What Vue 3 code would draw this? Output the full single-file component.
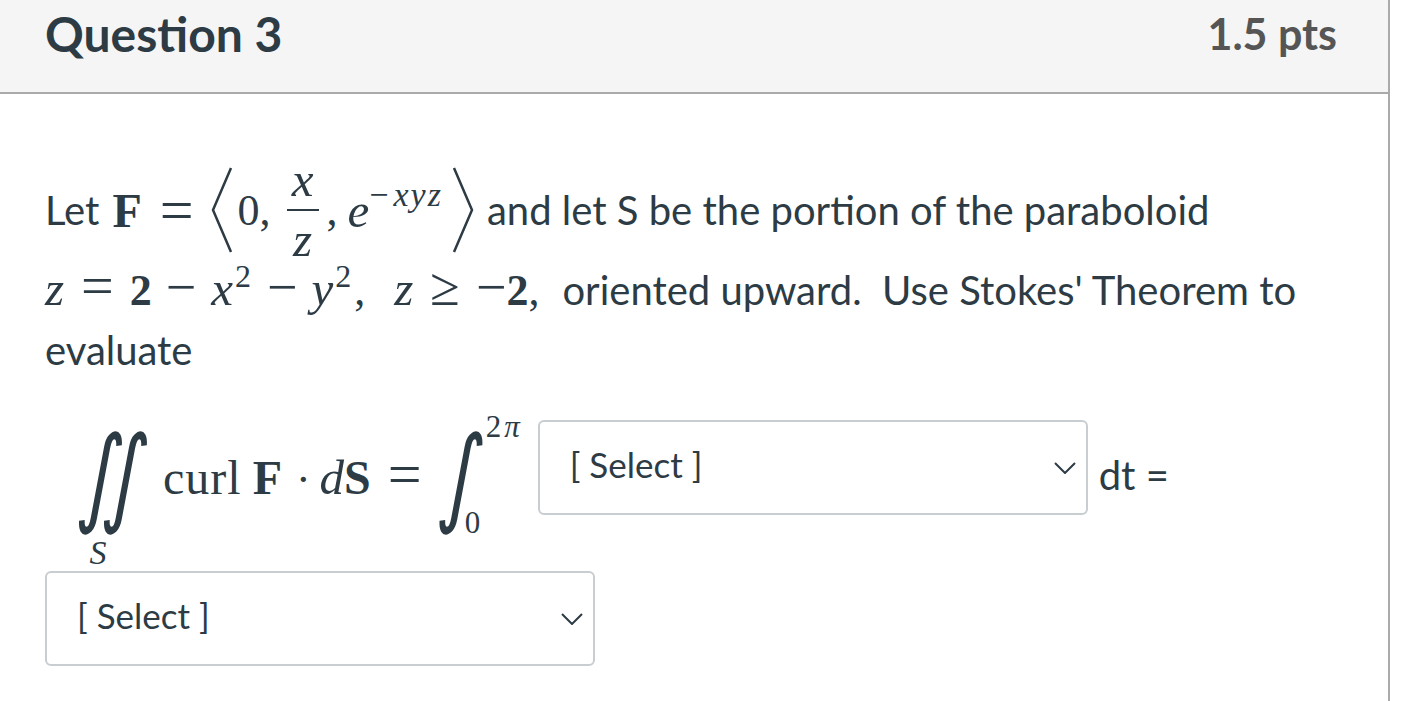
<template>
  <div class="question">
    <header class="q-header">
      <h2 class="q-title">Question 3</h2>
      <div class="q-pts">1.5 pts</div>
    </header>

    <section class="q-body">
      <div class="line line-1">
        <span class="txt">Let</span>
        <b class="math big-b f">F</b>
        <span class="math eq">=</span>
        <svg class="angle open" width="24" height="88" viewBox="0 0 24 88"><path d="M21 2 L3 44 L21 86" /></svg>
        <span class="math zero">0,</span>
        <span class="frac">
          <i class="math ital num">x</i>
          <i class="math ital den">z</i>
        </span>
        <span class="math comma">,</span>
        <i class="math ital e">e</i>
        <span class="math sup">−<i>xyz</i></span>
        <svg class="angle close" width="24" height="88" viewBox="0 0 24 88"><path d="M3 2 L21 44 L3 86" /></svg>
        <span class="txt after">and let S be the portion of the paraboloid</span>
      </div>

      <div class="line line-2">
        <i class="math ital">z</i>
        <span class="math eq-2">=</span>
        <b class="math heavy">2</b>
        <span class="math op m1">−</span>
        <i class="math ital">x</i><span class="math pow">2</span>
        <span class="math op m2">−</span>
        <i class="math ital">y</i><span class="math pow p2">2</span>
        <span class="math c2">,</span>
        <i class="math ital">z</i>
        <span class="math op ge">≥</span>
        <span class="math op">−</span><b class="math heavy">2</b><span class="math">,</span>
        <span class="txt after2">oriented upward.&nbsp; Use Stokes' Theorem to</span>
      </div>

      <div class="line line-3"><span class="txt">evaluate</span></div>

      <div class="line line-4">
        <span class="dbl">
          <span class="int-row"><span class="int">∫</span><span class="int">∫</span></span>
          <i class="math s-sub">S</i>
        </span>
        <span class="expr">
          <span class="math curl">curl</span>
          <b class="math big-b f2">F</b>
          <span class="math dot">·</span>
          <i class="math ital">d</i><b class="math big-b">S</b>
          <span class="math eq2">=</span>
        </span>
        <span class="single">
          <span class="int int-one">∫</span>
          <span class="limits">
            <span class="math lim up">2<i>π</i></span>
            <span class="math lim zero-lim">0</span>
          </span>
        </span>
        <div class="select wide">
          <span>[ Select ]</span>
          <svg width="22" height="12" viewBox="0 0 22 12"><path d="M1 1 L11 11 L21 1" /></svg>
        </div>
        <span class="txt dt">dt =</span>
      </div>

      <div class="select narrow">
        <span>[ Select ]</span>
        <svg width="22" height="12" viewBox="0 0 22 12"><path d="M1 1 L11 11 L21 1" /></svg>
      </div>
    </section>
  </div>
</template>

<script setup>
</script>

<style>
body {
  background: #fff;
  overflow: hidden;
}
</style>

<style scoped>
.question {
  width: 1388px;
  height: 701px;
  border-right: 2px solid #aaa;
  font-family: Lato, "Liberation Sans", sans-serif;
  color: #2d3b45;
}

.q-header {
  display: flex;
  justify-content: space-between;
  align-items: center;
  height: 66px;
  padding: 0 51px 26px 45px;
  background: #f5f5f5;
  border-bottom: 2px solid #aaa;
}

.q-title {
  margin: 0;
  font-size: 48px;
  font-weight: 700;
}

.q-pts {
  font-size: 43px;
  font-weight: 700;
  color: #555;
}

.q-body {
  padding: 70px 0 0 45px;
}

.line {
  display: flex;
  align-items: baseline;
  white-space: pre;
}

.line-1 {
  align-items: center;
  height: 92px;
}

.line-2 {
  height: 64px;
  line-height: 60px;
}

.line-3 {
  height: 60px;
  line-height: 60px;
  margin-bottom: 40px;
}

.txt {
  font-size: 40px;
}

.math {
  font-family: "Liberation Serif", serif;
  font-size: 44px;
  font-weight: 400;
}

.ital {
  font-size: 49px;
}

.big-b {
  font-size: 48px;
  font-weight: 700;
}

.heavy {
  font-weight: 700;
}

.f {
  margin-left: 13px;
}

.eq {
  margin: 0 16px 0 18px;
  font-size: 60px;
}

.zero {
  margin-left: 4px;
}

.angle {
  flex: none;
}

.angle path {
  fill: none;
  stroke: #2d3b45;
  stroke-width: 2.5;
}

.frac {
  display: inline-flex;
  flex-direction: column;
  align-items: center;
  width: 32px;
  margin-left: 16px;
}

.num {
  width: 100%;
  border-bottom: 2px solid #2d3b45;
  text-align: center;
  line-height: 58px;
}

.den {
  line-height: 58px;
}

.comma {
  margin-left: 8px;
}

.e {
  margin-left: 10px;
}

.sup {
  font-size: 34px;
  margin-bottom: 30px;
}

.sup i {
  margin-left: 5px;
  letter-spacing: 2px;
}

.close {
  margin-left: 8px;
}

.after {
  margin-left: 12px;
}

.eq-2 {
  margin: 0 16px 0 17px;
  font-size: 58px;
}

.op {
  font-size: 54px;
}

.m1 {
  margin: 0 15px 0 14px;
}

.m2 {
  margin: 0 14px 0 16px;
}

.p2 {
  margin-left: 2px;
}

.ge {
  margin: 0 16px 0 17px;
}

.pow {
  margin-left: 2px;
  font-size: 32px;
  align-self: flex-start;
  line-height: 40px;
}

.c2 {
  margin: 0 29px 0 3px;
}

.after2 {
  margin-left: 23px;
}

.line-4 {
  align-items: center;
  height: 116px;
  margin-bottom: 35px;
}

.dbl {
  display: flex;
  flex-direction: column;
  align-items: center;
  width: 90px;
  height: 116px;
  margin-left: 24px;
}

.int-row {
  display: flex;
  justify-content: center;
  height: 116px;
}

.int {
  display: flex;
  justify-content: center;
  width: 25px;
  font-family: "DejaVu Sans", sans-serif;
  font-size: 96px;
  line-height: 116px;
  transform: translateY(-3px) scaleX(0.8) scaleY(1.11) skewX(-12deg);
}

.s-sub {
  margin-right: 32px;
  font-size: 34px;
  line-height: 34px;
}

.expr {
  display: flex;
  align-items: baseline;
  margin-bottom: 8px;
}

.curl {
  margin-left: 4px;
  font-size: 48px;
  letter-spacing: 1px;
}

.f2 {
  margin-left: 11px;
}

.dot {
  margin: 0 9px 0 14px;
}

.eq2 {
  margin: 0 19px 0 17px;
  font-size: 60px;
}

.single {
  display: flex;
  align-items: center;
}

.int-one {
  width: 42px;
}

.limits {
  display: flex;
  flex-direction: column;
  justify-content: space-between;
  height: 126px;
  margin: 0 0 6px 3px;
}

.lim {
  font-size: 31px;
  line-height: 30px;
}

.up {
  letter-spacing: 3px;
}

.zero-lim {
  margin-left: -21px;
}

.select {
  display: flex;
  justify-content: space-between;
  align-items: center;
  box-sizing: border-box;
  width: 550px;
  height: 95px;
  background: #fff;
  border: 2px solid #c7cdd1;
  border-radius: 6px;
  font-size: 35px;
  padding: 0 10px 0 30px;
}

.select span {
  margin-bottom: 8px;
}

.select path {
  fill: none;
  stroke: #2d3b45;
  stroke-width: 2;
}

.wide {
  margin: 0 0 21px 15px;
}

.dt {
  margin: 0 0 6px 11px;
}
</style>
